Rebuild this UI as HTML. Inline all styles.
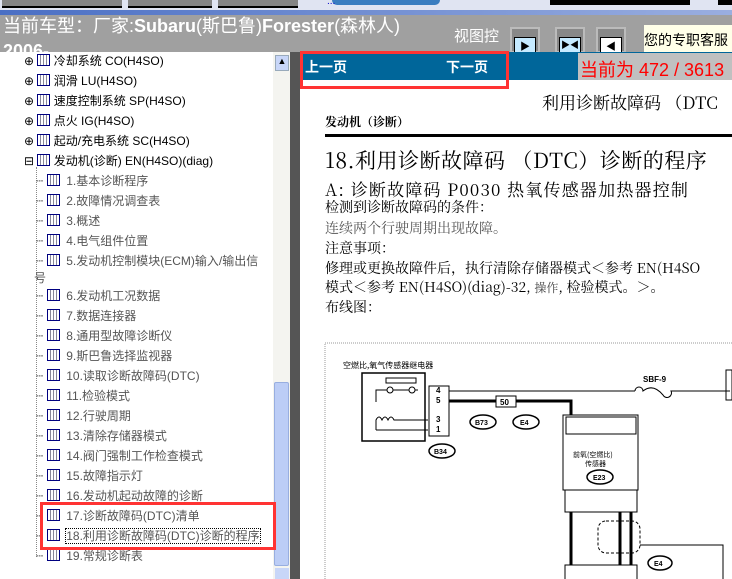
<!DOCTYPE html>
<html><head><meta charset="utf-8"><style>
*{margin:0;padding:0;box-sizing:border-box}
body{width:732px;height:579px;overflow:hidden;position:relative;background:#fff;font-family:"Liberation Sans","Noto Sans CJK SC",sans-serif}
.a{position:absolute}
.tree div{position:absolute;font-size:12px;white-space:nowrap;font-family:"WenQuanYi Zen Hei","Liberation Sans",sans-serif}
.p{color:#000}
.c{color:#555}
.ic{display:inline-block;width:13px;height:12px;border:1px solid #000080;background:repeating-linear-gradient(90deg,#fff 0 2px,#889 2px 3px),#fff;vertical-align:-1px}
.serif{font-family:"Noto Serif CJK SC","Liberation Serif",serif}
</style></head><body>
<div class="a" style="left:0;top:0;width:732px;height:11px;background:#e0e4f2"></div>
<div class="a" style="left:2px;top:0;width:120px;height:8px;background:#858585;border-bottom:2px solid #000"></div>
<div class="a" style="left:128px;top:0;width:84px;height:8px;background:#858585;border-bottom:2px solid #000"></div>
<div class="a" style="left:218px;top:0;width:80px;height:8px;background:#858585;border-bottom:2px solid #000"></div>
<div class="a" style="left:332px;top:0;width:108px;height:5px;background:#3a7dc0;border-radius:0 0 6px 6px"></div>
<div class="a" style="left:327px;top:-4px;font-size:10px;color:#00c">...</div>
<div class="a" style="left:550px;top:0;width:140px;height:5px;background:#000"></div>
<div class="a" style="left:718px;top:0;width:14px;height:5px;background:#000"></div>
<div class="a" style="left:0;top:10px;width:732px;height:5px;background:linear-gradient(90deg,#4a6fc4,#9aaee0)"></div>
<div class="a" style="left:0;top:15px;width:732px;height:37px;background:#a0a0a0;overflow:hidden">
<div class="a" style="left:3px;top:-1px;color:#fff;font-size:18px;line-height:25px;white-space:nowrap">当前车型：厂家:<b>Subaru</b>(斯巴鲁)<b>Forester</b>(森林人)<br><b>2006-</b></div>
<div class="a" style="left:454px;top:10px;color:#fff;font-size:15px">视图控</div>
<div class="a" style="left:510px;top:12px;width:30px;height:26px;background:#888;border:2px solid #bbb"><div class="a" style="left:2px;top:8px;width:22px;height:16px;background:#c6eaff;border:1px solid #000;font-size:10px;text-align:center">▶</div></div>
<div class="a" style="left:555px;top:12px;width:30px;height:26px;background:#888;border:2px solid #bbb"><div class="a" style="left:2px;top:8px;width:22px;height:16px;background:#c6eaff;border:1px solid #000;font-size:9px;text-align:center">▶◀</div></div>
<div class="a" style="left:596px;top:12px;width:30px;height:26px;background:#888;border:2px solid #bbb"><div class="a" style="left:2px;top:8px;width:22px;height:16px;background:#fff;border:1px solid #000;font-size:10px;text-align:center">◀</div></div>
<div class="a" style="left:644px;top:10px;width:90px;height:27px;background:#ffffe8;font-size:14px;padding-top:5px;white-space:nowrap">您的专职客服</div>
</div>
<div class="a" style="left:0;top:52px;width:290px;height:527px;background:#fff;overflow:hidden" >
<div class="tree">
<div class="p" style="left:24px;top:0">⊕ <span class="ic"></span> 冷却系统 CO(H4SO)</div>
<div class="p" style="left:24px;top:20px">⊕ <span class="ic"></span> 润滑 LU(H4SO)</div>
<div class="p" style="left:24px;top:40px">⊕ <span class="ic"></span> 速度控制系统 SP(H4SO)</div>
<div class="p" style="left:24px;top:60px">⊕ <span class="ic"></span> 点火 IG(H4SO)</div>
<div class="p" style="left:24px;top:80px">⊕ <span class="ic"></span> 起动/充电系统 SC(H4SO)</div>
<div class="p" style="left:24px;top:100px">⊟ <span class="ic"></span> 发动机(诊断) EN(H4SO)(diag)</div>
</div>
<div class="a" style="left:36px;top:115px;height:390px;border-left:1px dotted #888"></div>
<div class="tree c">
<div style="left:36px;top:120px">┄ <span class="ic"></span>&nbsp; 1.基本诊断程序</div>
<div style="left:36px;top:140px">┄ <span class="ic"></span>&nbsp; 2.故障情况调查表</div>
<div style="left:36px;top:160px">┄ <span class="ic"></span>&nbsp; 3.概述</div>
<div style="left:36px;top:180px">┄ <span class="ic"></span>&nbsp; 4.电气组件位置</div>
<div style="left:36px;top:200px">┄ <span class="ic"></span>&nbsp; 5.发动机控制模块(ECM)输入/输出信</div>
<div style="left:34px;top:217px">号</div>
<div style="left:36px;top:235px">┄ <span class="ic"></span>&nbsp; 6.发动机工况数据</div>
<div style="left:36px;top:255px">┄ <span class="ic"></span>&nbsp; 7.数据连接器</div>
<div style="left:36px;top:275px">┄ <span class="ic"></span>&nbsp; 8.通用型故障诊断仪</div>
<div style="left:36px;top:295px">┄ <span class="ic"></span>&nbsp; 9.斯巴鲁选择监视器</div>
<div style="left:36px;top:315px">┄ <span class="ic"></span>&nbsp; 10.读取诊断故障码(DTC)</div>
<div style="left:36px;top:335px">┄ <span class="ic"></span>&nbsp; 11.检验模式</div>
<div style="left:36px;top:355px">┄ <span class="ic"></span>&nbsp; 12.行驶周期</div>
<div style="left:36px;top:375px">┄ <span class="ic"></span>&nbsp; 13.清除存储器模式</div>
<div style="left:36px;top:395px">┄ <span class="ic"></span>&nbsp; 14.阀门强制工作检查模式</div>
<div style="left:36px;top:415px">┄ <span class="ic"></span>&nbsp; 15.故障指示灯</div>
<div style="left:36px;top:435px">┄ <span class="ic"></span>&nbsp; 16.发动机起动故障的诊断</div>
<div style="left:36px;top:455px">┄ <span class="ic"></span>&nbsp; 17.诊断故障码(DTC)清单</div>
<div style="left:36px;top:475px">┄ <span class="ic"></span>&nbsp; <span style="outline:1px dotted #000">18.利用诊断故障码(DTC)诊断的程序</span></div>
<div style="left:36px;top:495px">┄ <span class="ic"></span>&nbsp; 19.常规诊断表</div>
</div>
<div class="a" style="left:273px;top:0;width:17px;height:527px;background:#f4f4f0"></div>
<div class="a" style="left:275px;top:3px;width:14px;height:16px;background:#c8d6f8;border:1px solid #9ab;font-size:9px;text-align:center">▲</div>
<div class="a" style="left:274px;top:330px;width:15px;height:184px;background:#bccdf6;border:1px solid #98aee0;border-radius:2px"></div>
<div class="a" style="left:275px;top:516px;width:14px;height:11px;background:#c8d6f8"></div>
</div>
<div class="a" style="left:40px;top:502px;width:236px;height:48px;border:3px solid #f33"></div>
<div class="a" style="left:290px;top:52px;width:10px;height:527px;background:#555"></div>
<div class="a" style="left:300px;top:52px;width:432px;height:28px;background:#00669a"></div>
<div class="a" style="left:305px;top:57px;color:#fff;font-size:14px;font-weight:bold">上一页</div>
<div class="a" style="left:446px;top:57px;color:#fff;font-size:14px;font-weight:bold">下一页</div>
<div class="a" style="left:578px;top:53px;width:154px;height:27px;background:#c0c0c0;color:#f00;font-size:18px;padding:3px 0 0 2px;white-space:nowrap">当前为 472 / 3613</div>
<div class="a" style="left:300px;top:80px;width:432px;height:8px;background:#fff"></div>
<div class="a" style="left:300px;top:51px;width:209px;height:38px;border:3px solid #f33"></div>
<div class="a serif" style="left:542px;top:89px;font-size:17px;white-space:nowrap">利用诊断故障码 （DTC</div>
<div class="a serif" style="left:325px;top:113px;font-size:12px;font-weight:bold">发动机（诊断）</div>
<div class="a" style="left:325px;top:134px;width:407px;height:3px;background:#000"></div>
<div class="a serif" style="left:325px;top:145px;font-size:21px;white-space:nowrap;letter-spacing:0.5px">18.利用诊断故障码 （DTC）诊断的程序</div>
<div class="a serif" style="left:325px;top:176px;font-size:17px;white-space:nowrap;letter-spacing:1.2px">A: 诊断故障码 P0030 热氧传感器加热器控制</div>
<div class="a serif" style="left:325px;top:197px;font-size:14px;line-height:21px;white-space:nowrap">检测到诊断故障码的条件：<br><span style="color:#555">连续两个行驶周期出现故障。</span></div>
<div class="a serif" style="left:325px;top:239px;font-size:14px;line-height:19.5px;white-space:nowrap">注意事项：<br>修理或更换故障件后，执行清除存储器模式＜参考 EN(H4SO<br>模式＜参考 EN(H4SO)(diag)-32, <span style="font-size:12px;color:#444">操作</span>, 检验模式。＞。<br>布线图：</div>
<svg class="a" style="left:300px;top:330px" width="432" height="249">
<rect x="25" y="13" width="420" height="250" fill="none" stroke="#999" stroke-dasharray="1 1"/>
<text x="43" y="38" font-size="8" font-family="Noto Sans CJK SC">空燃比,氧气传感器继电器</text>
<rect x="62" y="43" width="63" height="68" fill="none" stroke="#000" stroke-width="1.5"/>
<rect x="86" y="48" width="30" height="5" fill="none" stroke="#000"/>
<polyline points="76,72 76,60 118,60" fill="none" stroke="#000"/>
<circle cx="90" cy="60" r="3" fill="#fff" stroke="#000"/><circle cx="112" cy="60" r="3" fill="#fff" stroke="#000"/>
<path d="M76,100 V90 q3,-6 6,0 q3,-6 6,0 q3,-6 6,0 H128 M76,100 H128" fill="none" stroke="#000"/>
<rect x="129" y="56" width="20" height="50" fill="#fff" stroke="#000"/>
<text x="136" y="63" font-size="8" font-weight="bold">4</text><text x="136" y="73" font-size="8" font-weight="bold">5</text>
<text x="136" y="92" font-size="8" font-weight="bold">3</text><text x="136" y="102" font-size="8" font-weight="bold">1</text>
<line x1="149" y1="61" x2="335" y2="61" stroke="#000"/>
<path d="M335,61 a4,4 0 1 1 8,0 q10,-8 20,4 a4,4 0 1 0 8,-4 H430" fill="none" stroke="#000"/>
<text x="343" y="52" font-size="8" font-weight="bold">SBF-9</text>
<polyline points="149,71 271,71 271,85" fill="none" stroke="#000" stroke-width="3"/>
<rect x="196" y="66" width="20" height="11" fill="#fff" stroke="#000"/><text x="200" y="75" font-size="8" font-weight="bold">50</text>
<ellipse cx="183" cy="92" rx="13" ry="7" fill="#fff" stroke="#000" stroke-width="1.5"/><text x="175" y="95" font-size="7" font-weight="bold">B73</text>
<ellipse cx="226" cy="92" rx="13" ry="7" fill="#fff" stroke="#000" stroke-width="1.5"/><text x="220" y="95" font-size="7" font-weight="bold">E4</text>
<ellipse cx="142" cy="121" rx="13" ry="7" fill="#fff" stroke="#000" stroke-width="1.5"/><text x="134" y="124" font-size="7" font-weight="bold">B34</text>
<rect x="263" y="85" width="75" height="75" fill="none" stroke="#000"/>
<rect x="266" y="87" width="70" height="17" fill="none" stroke="#000"/>
<text x="273" y="127" font-size="7" font-family="Noto Sans CJK SC">前氧(空燃比)</text><text x="285" y="136" font-size="7" font-family="Noto Sans CJK SC">传感器</text>
<ellipse cx="300" cy="147" rx="13" ry="7" fill="#fff" stroke="#000" stroke-width="1.5"/><text x="293" y="150" font-size="7" font-weight="bold">E23</text>
<rect x="265" y="160" width="72" height="22" fill="none" stroke="#000"/>
<path d="M271,182 V235 M320,182 V235 M331,182 V235" stroke="#000" stroke-width="3"/>
<rect x="298" y="191" width="42" height="32" rx="8" fill="none" stroke="#000" stroke-dasharray="3 2"/>
<polyline points="340,215 423,215 423,249" fill="none" stroke="#000"/>
<ellipse cx="360" cy="233" rx="12" ry="7" fill="#fff" stroke="#000" stroke-width="1.5"/><text x="354" y="236" font-size="7" font-weight="bold">E4</text>
<rect x="265" y="235" width="72" height="20" fill="none" stroke="#000"/>
<rect x="426" y="40" width="6" height="30" fill="none" stroke="#000"/>
</svg>
</body></html>
